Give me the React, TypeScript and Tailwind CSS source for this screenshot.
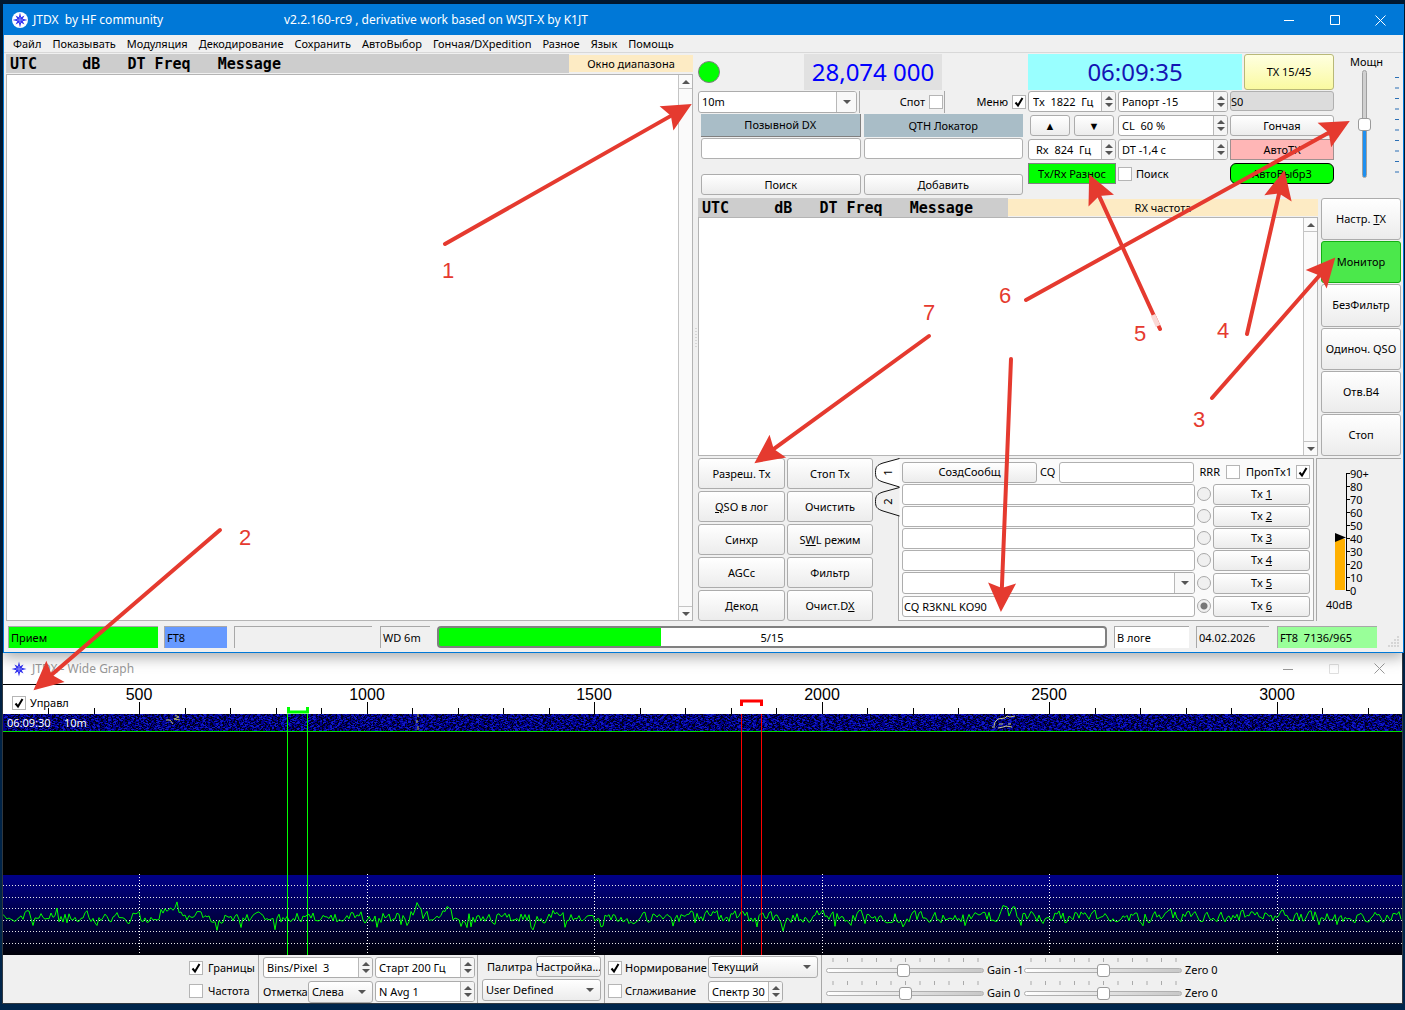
import { useState } from 'react';
import type { ReactNode } from 'react';
import clsx from 'clsx';

const GREY_BTN = 'rounded-[3px] border border-[#acacac] bg-linear-to-b from-white to-[#ececec]';

const MENU = ['Файл', 'Показывать', 'Модуляция', 'Декодирование', 'Сохранить', 'АвтоВыбор', 'Гончая/DXpedition', 'Разное', 'Язык', 'Помощь'];

// small seeded generator, keeps the noise the same between renders
const makeRandom = (seed: number) => () => {
  seed = (seed * 1664525 + 1013904223) % 4294967296;
  return seed / 4294967296;
};

const waterfallPath = (seed: number, density: number) => {
  const rnd = makeRandom(seed);
  let d = '';
  for (let y = 0; y < 17; y++) {
    let x = 0;
    while (x < 1400) {
      x += 1 + Math.floor(rnd() * density);
      const w = 1 + Math.floor(rnd() * 3);
      d += `M${x} ${30 + y}h${w}v1h-${w}z`;
      x += w;
    }
  }
  return d;
};

const PEAKS = [[53, 6], [163, 6], [173, 11], [414, 9], [446, 9], [588, 4], [818, 7], [1000, 9], [1010, 6], [1054, 7]];

const spectrumPoints = () => {
  const rnd = makeRandom(77);
  const pts: string[] = [];
  let level = 0;
  for (let x = 0; x < 1399; x += 2) {
    level = level * 0.3 + (rnd() - 0.5) * 11;
    let y = 233 + level;
    if (rnd() > 0.94) y += 7;
    for (const [px, h] of PEAKS) y -= h * Math.exp(-((x - px) ** 2) / 20);
    pts.push(`${x},${y.toFixed(1)}`);
  }
  return pts.join(' ');
};

const DARK_NOISE = waterfallPath(11, 4);
const LIGHT_NOISE = waterfallPath(29, 14);
const SPECTRUM = spectrumPoints();

const Compass = () => (
  <svg width="16" height="16" viewBox="0 0 16 16" className="shrink-0">
    <circle cx="8" cy="8" r="8" fill="#fff" />
    <path d="M8 .5l1.200 4.800 3.300-1.800-1.800 3.300 4.800 1.200-4.800 1.200 1.800 3.300-3.300-1.800L8 15.500l-1.200-4.800-3.300 1.800 1.800-3.300L.5 8l4.800-1.200-1.800-3.300 3.300 1.800z" fill="#3030f0" />
    <path d="M8 5v6M5 8h6" stroke="#8c8cff" strokeWidth="1" />
  </svg>
);

const WindowButtons = ({ dim }: { dim?: boolean }) => (
  <div className="ml-auto flex h-full">
    <button aria-label="Свернуть" className="flex w-[46px] items-center justify-center">
      <svg width="10" height="10"><path d="M0 5.500h10" stroke="currentColor" /></svg>
    </button>
    <button aria-label="Развернуть" disabled={dim} className="flex w-[45px] items-center justify-center disabled:opacity-30">
      <svg width="10" height="10"><path d="M.5.5h9v9h-9z" fill="none" stroke="currentColor" /></svg>
    </button>
    <button aria-label="Закрыть" className="flex w-[46px] items-center justify-center">
      <svg width="11" height="11"><path d="M.5.5l10 10M10.500.5l-10 10" stroke="currentColor" /></svg>
    </button>
  </div>
);

type BtnProps = { children?: ReactNode; className?: string; tone?: string };

const Btn = ({ children, className, tone = GREY_BTN }: BtnProps) => (
  <button className={clsx('flex items-center justify-center overflow-hidden whitespace-nowrap', tone, className)}>
    <span>{children}</span>
  </button>
);

const Field = ({ label, value = '', className }: { label: string; value?: string; className?: string }) => (
  <input
    aria-label={label}
    defaultValue={value}
    className={clsx('h-[21px] min-w-0 rounded-[3px] border border-[#b0b0b0] bg-white px-px outline-none', className)}
  />
);

const Spin = ({ label, value, className, pad = 'pl-1' }: { label: string; value: string; className?: string; pad?: string }) => (
  <div className={clsx('flex h-[21px] rounded-[3px] border border-[#acacac] bg-white', className)}>
    <input aria-label={label} defaultValue={value} className={clsx('w-full min-w-0 bg-transparent outline-none', pad)} />
    <div className="flex w-[14px] shrink-0 flex-col items-center justify-center gap-[3px] rounded-r-[2px] border-l border-[#b8b8b8] bg-[#f5f5f5]">
      <button aria-label={`${label} больше`}>
        <svg width="8" height="4" className="block"><path d="M0 4l4-4 4 4z" fill="#555" /></svg>
      </button>
      <button aria-label={`${label} меньше`}>
        <svg width="8" height="4" className="block"><path d="M0 0l4 4 4-4z" fill="#555" /></svg>
      </button>
    </div>
  </div>
);

const Combo = ({ label, value, flat, className }: { label: string; value: string; flat?: boolean; className?: string }) => (
  <div className={clsx('relative h-[22px]', className)}>
    <select
      aria-label={label}
      className={clsx('h-full w-full appearance-none rounded-[3px] border border-[#acacac] pl-[3px] outline-none', flat ? 'bg-linear-to-b from-white to-[#ececec]' : 'bg-white')}
    >
      <option>{value}</option>
    </select>
    <span className={clsx('pointer-events-none absolute inset-y-px right-px flex w-5 items-center justify-center rounded-r-[2px]', !flat && 'border-l border-[#b8b8b8] bg-[#f8f8f8]')}>
      <svg width="8" height="4"><path d="M0 0h8l-4 4z" fill="#555" /></svg>
    </span>
  </div>
);

type CheckProps = { label: string; on?: boolean; before?: boolean; className?: string };

const Check = ({ label, on = false, before, className }: CheckProps) => {
  const [checked, setChecked] = useState(on);

  return (
    <label className={clsx('flex items-center gap-1 whitespace-nowrap', before && 'flex-row-reverse', className)}>
      <span className="relative block size-[14px] shrink-0">
        <input
          type="checkbox"
          checked={checked}
          onChange={(e) => setChecked(e.target.checked)}
          className="block size-[14px] appearance-none border border-[#b5b5b5] bg-white"
        />
        {checked && (
          <svg width="14" height="14" className="pointer-events-none absolute inset-0">
            <path d="M3.500 7.500l2.500 3L10.500 3" fill="none" stroke="#000" strokeWidth="2" />
          </svg>
        )}
      </span>
      <span>{label}</span>
    </label>
  );
};

const HSlider = ({ label, value }: { label: string; value: number }) => (
  <label className="flex items-end">
    <span className="mr-[3px] block w-[158px]">
      <svg width="158" height="5" className="block">
        {Array.from({ length: 11 }, (_, i) => (
          <path key={i} d={`M${7 + i * 14.5} 0v4`} stroke="#aaa" />
        ))}
      </svg>
      <input
        type="range"
        defaultValue={value}
        className="block h-[14px] w-full appearance-none bg-transparent [&::-webkit-slider-runnable-track]:h-[5px] [&::-webkit-slider-runnable-track]:rounded-sm [&::-webkit-slider-runnable-track]:border [&::-webkit-slider-runnable-track]:border-[#b0b0b0] [&::-webkit-slider-runnable-track]:bg-linear-to-r [&::-webkit-slider-runnable-track]:from-white [&::-webkit-slider-runnable-track]:to-[#c8c8c8] [&::-webkit-slider-thumb]:-mt-[5px] [&::-webkit-slider-thumb]:h-[13px] [&::-webkit-slider-thumb]:w-[13px] [&::-webkit-slider-thumb]:appearance-none [&::-webkit-slider-thumb]:rounded-[3px] [&::-webkit-slider-thumb]:border [&::-webkit-slider-thumb]:border-[#9a9a9a] [&::-webkit-slider-thumb]:bg-white"
      />
    </span>
    <span className="w-[37px] whitespace-nowrap">{label}</span>
  </label>
);

const LogHeader = ({ title, side }: { title: string; side: string }) => (
  <div className="flex h-[19px] items-start">
    <pre className="h-[19px] flex-1 overflow-hidden bg-[#cdcdcd] pl-1 font-['DejaVu_Sans_Mono',monospace] text-[15px] leading-[21px] font-bold">
      {'UTC     dB   DT Freq   Message'}
    </pre>
    <span className={clsx('mt-px h-[17px] bg-[#fdebc4] text-center leading-[17px]', side)}>{title}</span>
  </div>
);

const LogBox = ({ label }: { label: string }) => (
  <div className="flex flex-1 border border-[#b4b4b4] bg-white">
    <textarea aria-label={label} readOnly className="min-w-0 flex-1 resize-none outline-none" />
    <div className="flex w-[14px] flex-col justify-between border-l border-[#c4c4c4] bg-[#fafafa]">
      <button aria-label="Вверх" className="flex h-[14px] items-center justify-center border-b border-[#c4c4c4]">
        <svg width="8" height="4"><path d="M0 4l4-4 4 4z" fill="#555" /></svg>
      </button>
      <button aria-label="Вниз" className="flex h-[14px] items-center justify-center border-t border-[#c4c4c4]">
        <svg width="8" height="4"><path d="M0 0l4 4 4-4z" fill="#555" /></svg>
      </button>
    </div>
  </div>
);

const Tab = ({ n }: { n: string }) => (
  <button className="relative block h-[29px] w-6">
    <svg width="25" height="30" className="absolute inset-0">
      <path d="M24.500.5L8 5C2 7 .5 9 .5 14.500S2 22 8 24l16.500 5" fill={n === '1' ? '#fff' : '#f0f0f0'} stroke="#111" />
    </svg>
    <span className="absolute inset-0 flex -rotate-90 items-center justify-center">{n}</span>
  </button>
);

const Messages = () => {
  const [tx, setTx] = useState(6);

  return (
    <div className="flex-1 border border-[#a8a8a8] bg-[#fafafa] px-[3px] pt-[2px]">
      <div className="flex h-[22px] items-center">
        <Btn className="h-[21px] w-[135px]">СоздСообщ</Btn>
        <label className="ml-[3px] flex items-center">
          <span className="w-[19px]">CQ</span>
          <Field label="CQ" className="w-[135px]" />
        </label>
        <Check label="RRR" before className="ml-auto gap-[6px]" />
        <Check label="ПропTx1" on before className="ml-[6px]" />
      </div>
      {[1, 2, 3, 4, 5, 6].map((n) => (
        <div key={n} className={clsx('flex items-center', n === 5 ? 'h-6' : 'h-[22px]')}>
          {n === 5 ? (
            <Combo label="Tx 5" value="" className="flex-1" />
          ) : (
            <Field label={`Сообщение ${n}`} value={n === 6 ? 'CQ R3KNL KO90' : ''} className="flex-1" />
          )}
          <input
            type="radio"
            name="tx"
            aria-label={`Выбрать Tx ${n}`}
            checked={tx === n}
            onChange={() => setTx(n)}
            className="mx-[2px] size-[14px] appearance-none rounded-full border border-[#a8a8a8] bg-[#f0f0f0] checked:bg-[radial-gradient(circle,#777_0_3px,#f0f0f0_4px)]"
          />
          <Btn className="h-[21px] w-[97px]">Tx <u>{n}</u></Btn>
        </div>
      ))}
    </div>
  );
};

const Meter = () => (
  <div className="ml-[2px] w-[85px] border-t border-l border-[#a8a8a8]">
    <svg width="84" height="160" fontSize="11">
      <rect x="18" y="80" width="10" height="51" fill="#ffb000" />
      <path d="M18 74l11 4.500L18 83z" />
      <path d="M29.500 14v117" stroke="#000" />
      {[90, 80, 70, 60, 50, 40, 30, 20, 10, 0].map((v, i) => (
        <g key={v}>
          <path d={`M29 ${14.5 + i * 13}h4`} stroke="#000" />
          <text x="33" y={19 + i * 13}>{v === 90 ? '90+' : v}</text>
        </g>
      ))}
      <text x="9" y="150">40dB</text>
    </svg>
  </div>
);

const Power = () => (
  <div className="flex-1 pr-1 text-center">
    <label htmlFor="power" className="block h-4 leading-4">Мощн</label>
    <div className="flex h-[108px] justify-end">
      <input
        id="power"
        type="range"
        defaultValue={50}
        className="block h-[108px] w-[14px] appearance-none bg-transparent [direction:rtl] [writing-mode:vertical-lr] [&::-webkit-slider-runnable-track]:h-full [&::-webkit-slider-runnable-track]:w-[5px] [&::-webkit-slider-runnable-track]:rounded-sm [&::-webkit-slider-runnable-track]:border [&::-webkit-slider-runnable-track]:border-[#a0a0a0] [&::-webkit-slider-runnable-track]:bg-linear-to-b [&::-webkit-slider-runnable-track]:from-[#d0d0d0] [&::-webkit-slider-runnable-track]:from-50% [&::-webkit-slider-runnable-track]:to-[#1e90f0] [&::-webkit-slider-runnable-track]:to-50% [&::-webkit-slider-thumb]:-ml-[5px] [&::-webkit-slider-thumb]:size-[13px] [&::-webkit-slider-thumb]:appearance-none [&::-webkit-slider-thumb]:rounded-[3px] [&::-webkit-slider-thumb]:border [&::-webkit-slider-thumb]:border-[#9a9a9a] [&::-webkit-slider-thumb]:bg-white"
      />
      <svg width="4" height="108" className="ml-6">
        {Array.from({ length: 10 }, (_, i) => (
          <path key={i} d={`M0 ${7.5 + i * 10.5}h4`} stroke="#2a6fb5" />
        ))}
      </svg>
    </div>
  </div>
);

const StationPanel = () => (
  <div className="w-[330px]">
    <div className="flex h-[37px] items-start justify-between">
      <span className="mt-[7px] size-[22px] rounded-full border border-[#808080] bg-[#00ff00]" />
      <span className="mr-[86px] h-9 w-[138px] bg-[#e1e1e1] text-center text-[24px] leading-9 text-[#0000ff]">28,074 000</span>
    </div>
    <div className="flex h-[23px] items-start">
      <Combo label="Диапазон" value="10m" className="w-[159px]" />
      <Check label="Спот" before className="ml-[2px] h-[22px] w-[86px] border-r border-l border-[#a8a8a8] pr-px" />
      <Check label="Меню" on before className="ml-auto h-[21px] pr-[2px]" />
    </div>
    <div className="grid grid-cols-2 gap-x-[3px] pr-[5px] pl-[3px]">
      <Btn tone="bg-[#a9bdc7] border-r border-b border-[#808080]" className="h-[23px]">Позывной DX</Btn>
      <Btn tone="bg-[#a9bdc7]" className="h-[23px]">QTH Локатор</Btn>
      <Field label="Позывной DX" className="mt-px" />
      <Field label="QTH Локатор" className="mt-px" />
      <Btn className="mt-[15px] h-[21px]">Поиск</Btn>
      <Btn className="mt-[15px] h-[21px]">Добавить</Btn>
    </div>
  </div>
);

const TxPanel = () => (
  <div className="w-[306px]">
    <div className="flex h-[37px] items-start justify-between">
      <span className="h-9 w-[214px] bg-[#99ffff] text-center text-[24px] leading-9 text-[#1414b4]">06:09:35</span>
      <Btn tone="rounded-[3px] border border-[#b8b878] bg-linear-to-b from-[#ffffe0] to-[#fafaa0]" className="h-9 w-[90px]">TX 15/45</Btn>
    </div>
    <div className="grid grid-cols-[88px_110px_104px] gap-x-[2px] gap-y-[3px]">
      <Spin label="Tx" value="Tx  1822  Гц" />
      <Spin label="Рапорт" value="Рапорт -15" pad="pl-[3px]" />
      <input aria-label="S-метр" readOnly value="S0" className="h-[20px] w-full rounded-[3px] border border-[#b0b0b0] bg-[#dcdcdc] outline-none" />
      <div className="flex justify-between px-[2px]">
        <Btn className="w-10">▲</Btn>
        <Btn className="w-10">▼</Btn>
      </div>
      <Spin label="CL" value="CL  60 %" pad="pl-[3px]" />
      <Btn>Гончая</Btn>
      <Spin label="Rx" value="Rx  824  Гц" pad="pl-[7px]" />
      <Spin label="DT" value="DT -1,4 c" pad="pl-[3px]" />
      <Btn tone="border border-[#a09090] bg-[#ffb6b6]">АвтоTX</Btn>
      <Btn tone="border border-[#808080] bg-[#00ff00]" className="h-[21px]">Tx/Rx Разнос</Btn>
      <Check label="Поиск" />
      <Btn tone="rounded-md border border-black bg-[#00ff00]">АвтоВыбр3</Btn>
    </div>
  </div>
);

const StatusBar = () => {
  const sunken = 'h-[22px] border-t border-l border-[#a8a8a8] pl-[2px] leading-[22px] whitespace-pre';

  return (
    <div className="flex h-[27px] items-start pt-px pl-1">
      <span className={clsx(sunken, 'w-[150px] bg-[#00ff00]')}>Прием</span>
      <span className={clsx(sunken, 'ml-[6px] w-[63px] bg-[#6699ff]')}>FT8</span>
      <span className={clsx(sunken, 'ml-[7px] w-[138px]')} />
      <span className={clsx(sunken, 'ml-2 w-[50px]')}>WD 6m</span>
      <div className="ml-[7px] h-[22px] flex-1 overflow-hidden rounded-[4px] border-2 border-[#808080] bg-[linear-gradient(90deg,#00ff00_33.3%,#fff_33.3%)] text-center leading-[20px]" role="progressbar" aria-valuenow={5} aria-valuemax={15}>
        5/15
      </div>
      <span className={clsx(sunken, 'ml-[7px] w-[75px] bg-white')}>В логе</span>
      <span className={clsx(sunken, 'ml-[7px] w-[73px]')}>04.02.2026</span>
      <span className={clsx(sunken, 'ml-2 w-[100px] bg-[#99ff99]')}>{'FT8  7136/965'}</span>
      <svg width="12" height="12" className="mt-[10px] mr-[3px] ml-[11px]">
        <path d="M9 1h2M6 4h2M9 4h2M3 7h2M6 7h2M9 7h2M0 10h2M3 10h2M6 10h2M9 10h2" stroke="#bbb" strokeWidth="1" />
      </svg>
    </div>
  );
};

const SIDE = ['Монитор', 'БезФильтр', 'Одиноч. QSO', 'Отв.В4', 'Стоп'];

const MainWindow = () => (
  <div className="relative z-10 border border-[#0078d7] bg-[#f0f0f0] shadow-[0_4px_14px_rgba(0,0,0,0.35)]">
    <div className="flex h-[30px] items-center bg-[#0078d7] pl-2 text-[12px] text-white">
      <Compass />
      <span className="ml-[5px] w-[251px] whitespace-pre">JTDX  by HF community</span>
      <span>v2.2.160-rc9 , derivative work based on WSJT-X by K1JT</span>
      <WindowButtons />
    </div>
    <nav className="flex h-[18px] items-center gap-[11px] border-b border-[#d8d8d8] pl-[9px]">
      {MENU.map((m) => (
        <button key={m}>{m}</button>
      ))}
    </nav>

    <div className="flex pt-px pl-[2px]">
      <div className="flex min-w-0 flex-1 flex-col gap-px">
        <LogHeader title="Окно диапазона" side="w-[124px]" />
        <LogBox label="Окно диапазона" />
      </div>
      <div className="flex w-[5px] items-center justify-center">
        <svg width="2" height="20"><path d="M1 0v20" stroke="#bbb" strokeDasharray="1 2" /></svg>
      </div>

      <div className="w-[705px]">
        <div className="flex h-36">
          <StationPanel />
          <TxPanel />
          <Power />
        </div>

        <div className="flex h-[258px] gap-[3px] pr-[2px]">
          <div className="flex min-w-0 flex-1 flex-col">
            <LogHeader title="RX частота" side="w-[310px]" />
            <LogBox label="RX частота" />
          </div>
          <div className="flex w-20 flex-col gap-px">
            <Btn className="flex-1">Настр. <u>T</u>X</Btn>
            {SIDE.map((s) => (
              <Btn key={s} tone={s === 'Монитор' ? 'rounded-[3px] border border-[#12b012] bg-[#4be84b]' : GREY_BTN} className="flex-1">
                {s}
              </Btn>
            ))}
          </div>
        </div>

        <div className="mt-[2px] flex pr-[2px]">
          <div className="grid auto-rows-[31px] grid-cols-[87px_86px] gap-[2px]">
            <Btn>Разреш. Tx</Btn>
            <Btn>Стоп Tx</Btn>
            <Btn><u>Q</u>SO в лог</Btn>
            <Btn>Очистить</Btn>
            <Btn>Синхр</Btn>
            <Btn>S<u>W</u>L режим</Btn>
            <Btn>AGCc</Btn>
            <Btn>Фильтр</Btn>
            <Btn>Декод</Btn>
            <Btn>Очист.D<u>X</u></Btn>
          </div>
          <div className="ml-[2px] w-[23px]">
            <Tab n="1" />
            <Tab n="2" />
          </div>
          <Messages />
          <Meter />
        </div>
      </div>
    </div>

    <div className="pt-1">
      <StatusBar />
    </div>
  </div>
);

const hz = (f: number) => Math.round(136 + (f - 500) * 0.455);
const MAJOR = [500, 1000, 1500, 2000, 2500, 3000];

const Spectrum = () => (
  <svg className="block h-[271px] w-full bg-white" fontFamily="'Liberation Sans', sans-serif">
    <defs>
      <linearGradient id="floor" x1="0" y1="0" x2="0" y2="1">
        <stop offset="0" stopColor="#000088" />
        <stop offset="1" stopColor="#000008" />
      </linearGradient>
    </defs>
    <rect width="100%" height="1" />
    {Array.from({ length: 31 }, (_, i) => 300 + i * 100).map((f) => (
      <path key={f} d={`M${hz(f) + 0.5} ${MAJOR.includes(f) ? 18 : 24}V30`} stroke="#000" />
    ))}
    {MAJOR.map((f) => (
      <text key={f} x={hz(f)} y="16" fontSize="16" textAnchor="middle">{f}</text>
    ))}
    <rect y="30" width="100%" height="161" />
    <rect y="30" width="100%" height="17" fill="#00008c" />
    <path d={DARK_NOISE} fill="#00001c" />
    <path d={LIGHT_NOISE} fill="#1018c4" />
    <path d="M413 30v17M819 30v17" stroke="#1c28e0" />
    <path d="M172 31l4 2-5 2 6 1M163 36h4l3 4M415 30v3M414 36v3M415 42v4" stroke="#b8b86a" fill="none" />
    <path d="M1012 32l-5 1-3-1-2 2-7 1-3 3-1 4M989 43h3M995 44l5-1 3-1 6 1M996 40h4M1005 40h3" stroke="#c8c88a" fill="none" />
    <rect y="47" width="100%" height="1" fill="#00e000" />
    <rect y="191" width="100%" height="80" fill="url(#floor)" />
    {[201, 213, 224, 236, 247, 259].map((y) => (
      <line key={y} x1="0" x2="100%" y1={y + 0.5} y2={y + 0.5} stroke="#e8e8e8" strokeDasharray="1 2" />
    ))}
    {MAJOR.map((f) => (
      <path key={f} d={`M${hz(f) + 0.5} 190v80`} stroke="#fff" strokeDasharray="1 2" />
    ))}
    <polyline points={SPECTRUM} fill="none" stroke="#00ff00" />
    <path d="M284.500 30v241M304.500 30v241" stroke="#00ff00" />
    <path d="M738.500 30v241M758.500 30v241" stroke="#ff0000" />
    <path d="M285.500 23v5h19v-5" fill="none" stroke="#00ff00" strokeWidth="3" />
    <path d="M738.500 22v-5h20v5" fill="none" stroke="#ff0000" strokeWidth="3" />
    <text x="4" y="43" fontSize="11" fill="#fff" fontFamily="'Noto Sans', sans-serif">06:09:30</text>
    <text x="61" y="43" fontSize="11" fill="#fff" fontFamily="'Noto Sans', sans-serif">10m</text>
  </svg>
);

const Divider = () => <span className="w-px self-stretch bg-[#a8a8a8]" />;

const WideGraph = () => (
  <div className="border border-t-0 border-[#303840] bg-[#f0f0f0]">
    <div className="flex h-[31px] items-center bg-white pl-2 text-[12px] text-[#999]">
      <Compass />
      <span className="ml-[5px]">JTDX - Wide Graph</span>
      <WindowButtons dim />
    </div>
    <div className="relative">
      <Spectrum />
      <Check label="Управл" on className="absolute top-[11px] left-[9px] h-[15px]" />
    </div>

    <div className="flex h-12 items-start">
      <div className="ml-[186px] flex w-[67px] flex-col gap-2 pt-[5px]">
        <Check label="Границы" on className="h-[15px] gap-[5px]" />
        <Check label="Частота" className="h-[15px] gap-[5px]" />
      </div>
      <div className="ml-[2px] flex self-stretch"><Divider /></div>
      <div className="ml-1 flex w-[110px] flex-col gap-[3px] pt-[2px]">
        <Spin label="Bins/Pixel" value="Bins/Pixel  3" pad="pl-[3px]" />
        <div className="flex items-center">
          <span className="w-[45px]">Отметка</span>
          <Combo label="Отметка" value="Слева" flat className="flex-1" />
        </div>
      </div>
      <div className="ml-[2px] flex w-[100px] flex-col gap-[3px] pt-[2px]">
        <Spin label="Старт" value="Старт 200 Гц" pad="pl-[3px]" />
        <Spin label="N Avg" value="N Avg 1" pad="pl-[3px]" />
      </div>
      <div className="ml-[2px] flex self-stretch"><Divider /></div>
      <div className="ml-1 flex w-[119px] flex-col gap-[2px] pt-px">
        <div className="flex items-center justify-between pl-[5px]">
          <span>Палитра</span>
          <Btn className="h-[21px] w-[65px]">Настройка...</Btn>
        </div>
        <Combo label="Палитра" value="User Defined" flat />
      </div>
      <div className="ml-[3px] flex self-stretch"><Divider /></div>
      <div className="ml-[3px] flex w-[100px] flex-col gap-2 pt-[5px]">
        <Check label="Нормирование" on className="h-[15px] gap-[3px]" />
        <Check label="Сглаживание" className="h-[15px] gap-[3px]" />
      </div>
      <div className="flex w-[110px] flex-col gap-[3px] pt-px">
        <Combo label="Спектр" value="Текущий" flat />
        <Spin label="Спектр" value="Спектр 30" pad="pl-[3px]" className="w-[75px]" />
      </div>
      <div className="ml-[3px] flex self-stretch"><Divider /></div>
      <div className="ml-1 grid grid-cols-2 gap-y-1 pt-[3px]">
        <HSlider label="Gain -1" value={49} />
        <HSlider label="Zero 0" value={50} />
        <HSlider label="Gain 0" value={50} />
        <HSlider label="Zero 0" value={50} />
      </div>
    </div>
  </div>
);

const ARROWS = [
  [445, 244, 690, 105],
  [220, 530, 35, 689],
  [1212, 398, 1334, 259],
  [1247, 334, 1284, 172],
  [1160, 329, 1090, 176],
  [1026, 300, 1348, 122],
  [1011, 359, 1001, 610],
  [929, 336, 756, 462],
];

const NOTES: [string, number, number][] = [
  ['1', 448, 278],
  ['2', 245, 545],
  ['3', 1199, 427],
  ['4', 1223, 338],
  ['5', 1140, 341],
  ['6', 1005, 303],
  ['7', 929, 320],
];

const Annotations = () => (
  <svg className="pointer-events-none absolute inset-0 z-20 h-full w-full" fill="#e53a2f">
    {ARROWS.map(([x1, y1, x2, y2]) => {
      const len = Math.hypot(x2 - x1, y2 - y1);
      const angle = (Math.atan2(y2 - y1, x2 - x1) * 180) / Math.PI;
      return (
        <g key={x1} transform={`translate(${x1} ${y1}) rotate(${angle})`}>
          <path d={`M0 0H${len - 20}`} stroke="#e53a2f" strokeWidth="4" strokeLinecap="round" />
          <path d={`M${len + 2} 0l-29 -14 5 14 -5 14z`} />
        </g>
      );
    })}
    <path d="M1153 315l5 11" stroke="#fbd8d5" strokeWidth="5" />
    {NOTES.map(([n, x, y]) => (
      <text key={n} x={x} y={y} fontSize="22" textAnchor="middle" fontFamily="'Liberation Sans', sans-serif">{n}</text>
    ))}
  </svg>
);

export default function App() {
  return (
    <div className="relative min-h-screen bg-linear-to-b from-[#001a35] to-[#00264c] pt-1 font-['Noto_Sans',sans-serif] text-[11px] leading-[14px] text-black">
      <div className="pr-px pl-[3px]">
        <MainWindow />
      </div>
      <div className="pr-[2px] pl-[2px]">
        <WideGraph />
      </div>
      <Annotations />
    </div>
  );
}
